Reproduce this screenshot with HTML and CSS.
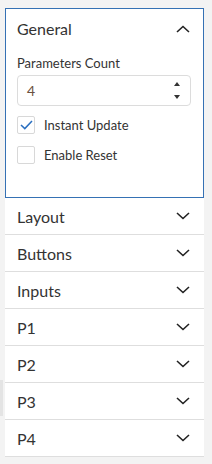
FILE: index.html
```html
<!DOCTYPE html>
<html lang="en">
<head>
<meta charset="UTF-8">
<meta name="viewport" content="width=device-width, initial-scale=1.0">
<title>Parameters</title>
<link rel="stylesheet" href="styles.css">
</head>
<body>
    <div class="handle"></div>
    <div class="panel">
        <div class="section open">
            <div class="section-head">
                <span>General</span>
                <svg class="chevron" width="14" height="8" viewBox="0 0 14 8"><path d="M1 7 L7 1.5 L13 7" fill="none" stroke="#222" stroke-width="1.6"/></svg>
            </div>
            <div class="section-body">
                <label class="field-label" for="count">Parameters Count</label>
                <div class="number-input">
                    <span class="value">4</span>
                    <div class="spinner">
                        <span class="up"></span>
                        <span class="down"></span>
                    </div>
                </div>
                <div class="check-row">
                    <span class="box checked">
                        <svg width="13" height="10" viewBox="0 0 13 10"><path d="M1 5 L4.8 8.6 L12 1" fill="none" stroke="#2a6fc0" stroke-width="1.5"/></svg>
                    </span>
                    <span>Instant Update</span>
                </div>
                <div class="check-row">
                    <span class="box"></span>
                    <span>Enable Reset</span>
                </div>
            </div>
        </div>
        <div class="section-head row"><span>Layout</span><svg class="chevron" width="14" height="8" viewBox="0 0 14 8"><path d="M1 1 L7 6.5 L13 1" fill="none" stroke="#222" stroke-width="1.6"/></svg></div>
        <div class="section-head row"><span>Buttons</span><svg class="chevron" width="14" height="8" viewBox="0 0 14 8"><path d="M1 1 L7 6.5 L13 1" fill="none" stroke="#222" stroke-width="1.6"/></svg></div>
        <div class="section-head row"><span>Inputs</span><svg class="chevron" width="14" height="8" viewBox="0 0 14 8"><path d="M1 1 L7 6.5 L13 1" fill="none" stroke="#222" stroke-width="1.6"/></svg></div>
        <div class="section-head row"><span>P1</span><svg class="chevron" width="14" height="8" viewBox="0 0 14 8"><path d="M1 1 L7 6.5 L13 1" fill="none" stroke="#222" stroke-width="1.6"/></svg></div>
        <div class="section-head row"><span>P2</span><svg class="chevron" width="14" height="8" viewBox="0 0 14 8"><path d="M1 1 L7 6.5 L13 1" fill="none" stroke="#222" stroke-width="1.6"/></svg></div>
        <div class="section-head row"><span>P3</span><svg class="chevron" width="14" height="8" viewBox="0 0 14 8"><path d="M1 1 L7 6.5 L13 1" fill="none" stroke="#222" stroke-width="1.6"/></svg></div>
        <div class="section-head row"><span>P4</span><svg class="chevron" width="14" height="8" viewBox="0 0 14 8"><path d="M1 1 L7 6.5 L13 1" fill="none" stroke="#222" stroke-width="1.6"/></svg></div>
    </div>
</body>
</html>
```

FILE: styles.css
```css
body {
    font-family: Lato, "Open Sans", sans-serif;
    margin: 0;
    padding: 0;
    background-color: #f3f3f3;
    color: #333;
}

.handle {
    position: absolute;
    left: 0;
    top: 380px;
    width: 3px;
    height: 36px;
    background-color: #e4e4e4;
}

.panel {
    width: 199px;
    margin: 8px 0 0 5px;
    background-color: #fff;
}

.section.open {
    border: 1px solid #3571b4;
}

.section-head {
    display: flex;
    align-items: center;
    justify-content: space-between;
    height: 38px;
    padding: 0 13px 0 11px;
    font-size: 16px;
    color: #333;
}

.section.open .section-head {
    height: 39px;
}

.section-head.row {
    height: 36px;
    padding: 0 14px 0 12px;
    border-bottom: 1px solid #dedede;
}

.section-body {
    padding: 0 12px 33px 11px;
}

.field-label {
    display: block;
    font-size: 13px;
    margin: 7px 0 4px;
}

.number-input {
    display: flex;
    align-items: center;
    justify-content: space-between;
    height: 29px;
    border: 1px solid #dcdcdc;
    border-radius: 4px;
    padding: 0 10px 0 9px;
    font-size: 14px;
    color: #6b5040;
}

.spinner {
    display: flex;
    flex-direction: column;
    gap: 9px;
}

.spinner .up {
    border-left: 3.5px solid transparent;
    border-right: 3.5px solid transparent;
    border-bottom: 4px solid #333;
}

.spinner .down {
    border-left: 3.5px solid transparent;
    border-right: 3.5px solid transparent;
    border-top: 4px solid #333;
}

.check-row {
    display: flex;
    align-items: center;
    gap: 9px;
    margin-top: 10px;
    font-size: 13px;
}

.check-row + .check-row {
    margin-top: 12px;
}

.box {
    display: flex;
    align-items: center;
    justify-content: center;
    width: 16px;
    height: 16px;
    border: 1px solid #d8d8d8;
    border-radius: 2px;
    background-color: #fff;
}
```
